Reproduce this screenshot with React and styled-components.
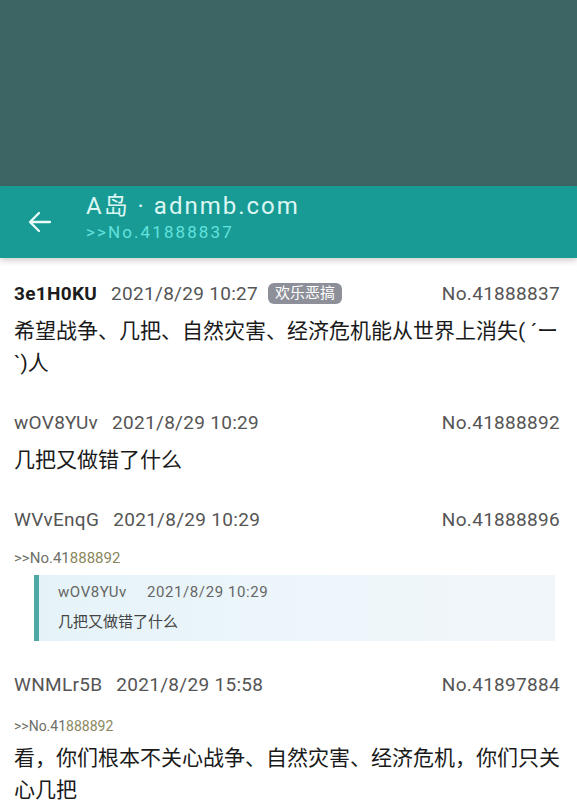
import styled, { createGlobalStyle } from "styled-components";

const GlobalStyle = createGlobalStyle`
  html, body {
    margin: 0;
    padding: 0;
    background: #ffffff;
  }
  body {
    font-family: "Roboto", "Noto Sans CJK SC", sans-serif;
  }
`;

const Screen = styled.div`
  width: 577px;
  height: 800px;
  overflow: hidden;
  display: flex;
  flex-direction: column;
  background: #ffffff;
`;

// 상단 어두운 영역 (영상 위쪽 부분)
const Backdrop = styled.div`
  height: 186px;
  flex-shrink: 0;
  background: #3d6563;
`;

const AppBar = styled.header`
  position: relative;
  z-index: 1;
  height: 72px;
  flex-shrink: 0;
  display: flex;
  align-items: center;
  background: #199b95;
  box-shadow: 0 3px 6px rgba(0, 0, 0, 0.18);
`;

const BackButton = styled.div`
  width: 86px;
  display: flex;
  justify-content: flex-start;
  padding-left: 28px;
  box-sizing: border-box;
  color: #e8fbf8;
`;

const Titles = styled.div`
  display: flex;
  flex-direction: column;
  margin-top: -10px;
`;

const Title = styled.div`
  font-size: 24px;
  line-height: 30px;
  letter-spacing: 2px;
  color: #dcf7f3;
`;

const Subtitle = styled.div`
  font-size: 17px;
  line-height: 22px;
  letter-spacing: 2.1px;
  color: #62e2de;
`;

const List = styled.main`
  display: flex;
  flex-direction: column;
  padding-top: 7px;
`;

const Post = styled.article`
  display: flex;
  flex-direction: column;
  padding: 14px 17px ${(p) => p.$bottom || 15}px 14px;
`;

const MetaRow = styled.div`
  display: flex;
  align-items: center;
  height: 28px;
  font-size: 19px;
  letter-spacing: 0.3px;
  color: #555555;
  white-space: nowrap;
`;

const Name = styled.span`
  font-weight: ${(p) => (p.$po ? 700 : 400)};
  color: ${(p) => (p.$po ? "#1c1c1c" : "#555555")};
  margin-right: 14px;
`;

const DateText = styled.span`
  color: #555555;
`;

const Tag = styled.span`
  margin-left: 10px;
  padding: 0 7px;
  height: 21px;
  line-height: 21px;
  border-radius: 6px;
  background: #8d9099;
  color: #ffffff;
  font-size: 15px;
  letter-spacing: 0;
`;

const PostNo = styled.span`
  margin-left: auto;
  color: #555555;
`;

const Body = styled.div`
  margin-top: ${(p) => p.$top ?? 8}px;
  font-size: 21px;
  line-height: 32px;
  color: #1a1a1a;
`;

const Ref = styled.div`
  margin-top: ${(p) => p.$top || 14}px;
  font-size: ${(p) => p.$size || 15}px;
  line-height: 22px;
  color: #6d7068;

  > b {
    font-weight: 400;
    color: #8a875d;
  }
`;

const Quote = styled.div`
  margin: 6px 5px 10px 20px;
  display: flex;
  background: linear-gradient(90deg, #e5f3f8 0%, #eef6fb 60%, #f1f6fa 100%);
`;

const QuoteBar = styled.div`
  width: 5px;
  flex-shrink: 0;
  background: #4ea8a6;
`;

const QuoteInner = styled.div`
  display: flex;
  flex-direction: column;
  gap: 6px;
  padding: 5px 0 7px 19px;
  font-size: 15px;
  line-height: 24px;
`;

const QuoteMeta = styled.div`
  display: flex;
  gap: 20px;
  color: #666666;
  font-size: 15px;
  letter-spacing: 0.6px;
`;

const QuoteText = styled.div`
  color: #444444;
`;

const ArrowIcon = () => (
  <svg width="24" height="24" viewBox="0 0 24 24" fill="none">
    <path
      d="M22 12H2.5M11 3 2 12l9 9"
      stroke="currentColor"
      strokeWidth="2.3"
      strokeLinecap="round"
      strokeLinejoin="round"
    />
  </svg>
);

const RefLink = ({ size, top }) => (
  <Ref $size={size} $top={top}>
    &gt;&gt;No.41<b>888892</b>
  </Ref>
);

export default function App() {
  return (
    <>
      <GlobalStyle />
      <Screen>
        <Backdrop />
        <AppBar>
          <BackButton>
            <ArrowIcon />
          </BackButton>
          <Titles>
            <Title>A岛 · adnmb.com</Title>
            <Subtitle>&gt;&gt;No.41888837</Subtitle>
          </Titles>
        </AppBar>

        <List>
          <Post>
            <MetaRow>
              <Name $po>3e1H0KU</Name>
              <DateText>2021/8/29 10:27</DateText>
              <Tag>欢乐恶搞</Tag>
              <PostNo>No.41888837</PostNo>
            </MetaRow>
            <Body>
              希望战争、几把、自然灾害、经济危机能从世界上消失( ´ー
              <br />
              `)人
            </Body>
          </Post>

          <Post>
            <MetaRow>
              <Name>wOV8YUv</Name>
              <DateText>2021/8/29 10:29</DateText>
              <PostNo>No.41888892</PostNo>
            </MetaRow>
            <Body>几把又做错了什么</Body>
          </Post>

          <Post $bottom={5}>
            <MetaRow>
              <Name>WVvEnqG</Name>
              <DateText>2021/8/29 10:29</DateText>
              <PostNo>No.41888896</PostNo>
            </MetaRow>
            <RefLink />
            <Quote>
              <QuoteBar />
              <QuoteInner>
                <QuoteMeta>
                  <span>wOV8YUv</span>
                  <span>2021/8/29 10:29</span>
                </QuoteMeta>
                <QuoteText>几把又做错了什么</QuoteText>
              </QuoteInner>
            </Quote>
          </Post>

          <Post>
            <MetaRow>
              <Name>WNMLr5B</Name>
              <DateText>2021/8/29 15:58</DateText>
              <PostNo>No.41897884</PostNo>
            </MetaRow>
            <RefLink size={14} top={17} />
            <Body $top={5}>
              看，你们根本不关心战争、自然灾害、经济危机，你们只关心几把
            </Body>
          </Post>
        </List>
      </Screen>
    </>
  );
}
